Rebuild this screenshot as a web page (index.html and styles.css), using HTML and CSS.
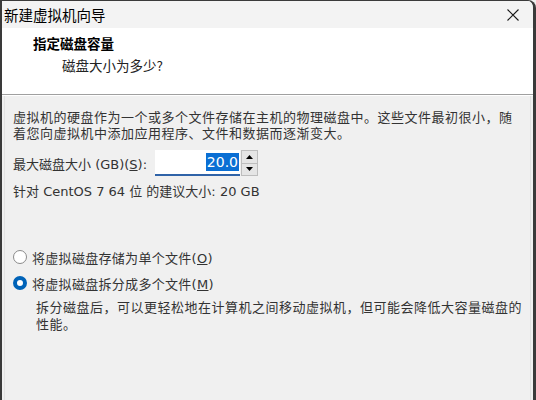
FILE: index.html
```html
<!DOCTYPE html>
<html lang="zh-CN">
<head>
<meta charset="utf-8">
<title>新建虚拟机向导</title>
<link rel="stylesheet" href="styles.css">
</head>
<body>
<div class="window">
  <div class="titlebar">
    <span class="title">新建虚拟机向导</span>
    <svg class="close" width="12" height="12" viewBox="0 0 12 12"><path d="M0.5 0.5 L11.5 11.5 M11.5 0.5 L0.5 11.5" stroke="#1a1a1a" stroke-width="1.1" fill="none"/></svg>
  </div>
  <div class="header">
    <div class="h-title">指定磁盘容量</div>
    <div class="h-sub">磁盘大小为多少?</div>
  </div>
  <div class="sep"></div>
  <div class="content">
    <p class="para">虚拟机的硬盘作为一个或多个文件存储在主机的物理磁盘中。这些文件最初很小，随<br>着您向虚拟机中添加应用程序、文件和数据而逐渐变大。</p>
    <div class="size-row">
      <span class="label">最大磁盘大小 (GB)(<u>S</u>):</span>
      <div class="spin">
        <div class="spin-input"><span class="sel">20.0</span></div>
        <div class="spin-btns">
          <div class="spin-btn"><svg width="7" height="4" viewBox="0 0 7 4"><path d="M0 4 L3.5 0 L7 4 Z" fill="#000"/></svg></div>
          <div class="spin-btn"><svg width="7" height="4" viewBox="0 0 7 4"><path d="M0 0 L3.5 4 L7 0 Z" fill="#000"/></svg></div>
        </div>
      </div>
    </div>
    <div class="rec">针对 CentOS 7 64 位 的建议大小: 20 GB</div>
    <div class="radios">
      <label class="radio"><span class="dot"></span><span>将虚拟磁盘存储为单个文件(<u>O</u>)</span></label>
      <label class="radio"><span class="dot on"></span><span>将虚拟磁盘拆分成多个文件(<u>M</u>)</span></label>
      <p class="desc">拆分磁盘后，可以更轻松地在计算机之间移动虚拟机，但可能会降低大容量磁盘的<br>性能。</p>
    </div>
  </div>
</div>
</body>
</html>
```
FILE: styles.css
```css
html, body {
  margin: 0;
  padding: 0;
  background: #f0f0f0;
}
.window {
  width: 536px;
  height: 400px;
  box-sizing: border-box;
  border-left: 2px solid #3a3a3a;
  border-right: 3px solid #3a3a3a;
  border-top: 1px solid #3a3a3a;
  border-top-right-radius: 8px;
  background: #f0f0f0;
  display: flex;
  flex-direction: column;
  font-family: "DejaVu Sans", "Noto Sans CJK SC", sans-serif;
  color: #1a1a1a;
  overflow: hidden;
}
.titlebar {
  height: 27px;
  background: #f3f3f3;
  display: flex;
  align-items: center;
  justify-content: space-between;
  padding: 0 14px 0 2px;
}
.title {
  font-family: "Noto Sans CJK SC", sans-serif;
  font-size: 14.5px;
  color: #000;
  line-height: 20px;
}
.close {
  display: block;
}
.header {
  height: 66px;
  background: #fff;
  padding: 5px 0 0 31px;
  box-sizing: border-box;
  font-family: "Noto Sans CJK SC", sans-serif;
}
.h-title {
  font-size: 13.5px;
  font-weight: bold;
  line-height: 20px;
  color: #000;
}
.h-sub {
  font-size: 13.5px;
  line-height: 20px;
  margin-top: 2px;
  padding-left: 29px;
  color: #222;
}
.sep {
  height: 1px;
  background: #a0a0a0;
  border-bottom: 1px solid #ffffff;
}
.content {
  flex: 1;
  padding: 13px 6px 0 8px;
  margin: 0 2px;
  border-left: 1px solid #e3e3e3;
  border-right: 1px solid #e3e3e3;
}
.para {
  margin: 0;
  font-family: "Noto Sans CJK SC", sans-serif;
  font-size: 13px;
  letter-spacing: 0.5px;
  line-height: 16px;
  color: #333;
  white-space: nowrap;
}
.size-row {
  display: flex;
  align-items: center;
  margin-top: 9px;
  height: 26px;
}
.label {
  width: 142px;
  font-size: 13px;
  color: #333;
  white-space: nowrap;
}
.spin {
  display: flex;
  height: 26px;
}
.spin-input {
  width: 85px;
  box-sizing: border-box;
  background: #fff;
  border-bottom: 2px solid #2f63a8;
  display: flex;
  align-items: center;
  justify-content: flex-end;
  padding-right: 1px;
}
.sel {
  background: #0a6fd4;
  color: #fff;
  font-size: 14px;
  line-height: 18px;
  padding: 0 1px;
}
.spin-btns {
  width: 17px;
  display: flex;
  flex-direction: column;
  margin-left: 1px;
}
.spin-btn {
  flex: 1;
  background: #e5e5e5;
  border: 1px solid #bdbdbd;
  display: flex;
  align-items: center;
  justify-content: center;
}
.spin-btn + .spin-btn {
  border-top: none;
}
.rec {
  margin-top: 8px;
  font-size: 13px;
  line-height: 16px;
  color: #333;
}
.radios {
  margin-top: 44px;
}
.radio {
  display: flex;
  align-items: center;
  gap: 5px;
  height: 26px;
  font-size: 13px;
  color: #333;
  letter-spacing: 0.3px;
}
.dot {
  width: 14px;
  height: 14px;
  box-sizing: border-box;
  border-radius: 50%;
  border: 1px solid #8a8a8a;
  background: #fff;
  flex: none;
}
.dot.on {
  border: 4px solid #0063b8;
  background: #fff;
}
.desc {
  margin: 2px 0 0 23px;
  font-family: "Noto Sans CJK SC", sans-serif;
  font-size: 13px;
  letter-spacing: 0.5px;
  line-height: 17px;
  color: #333;
  white-space: nowrap;
}
```
